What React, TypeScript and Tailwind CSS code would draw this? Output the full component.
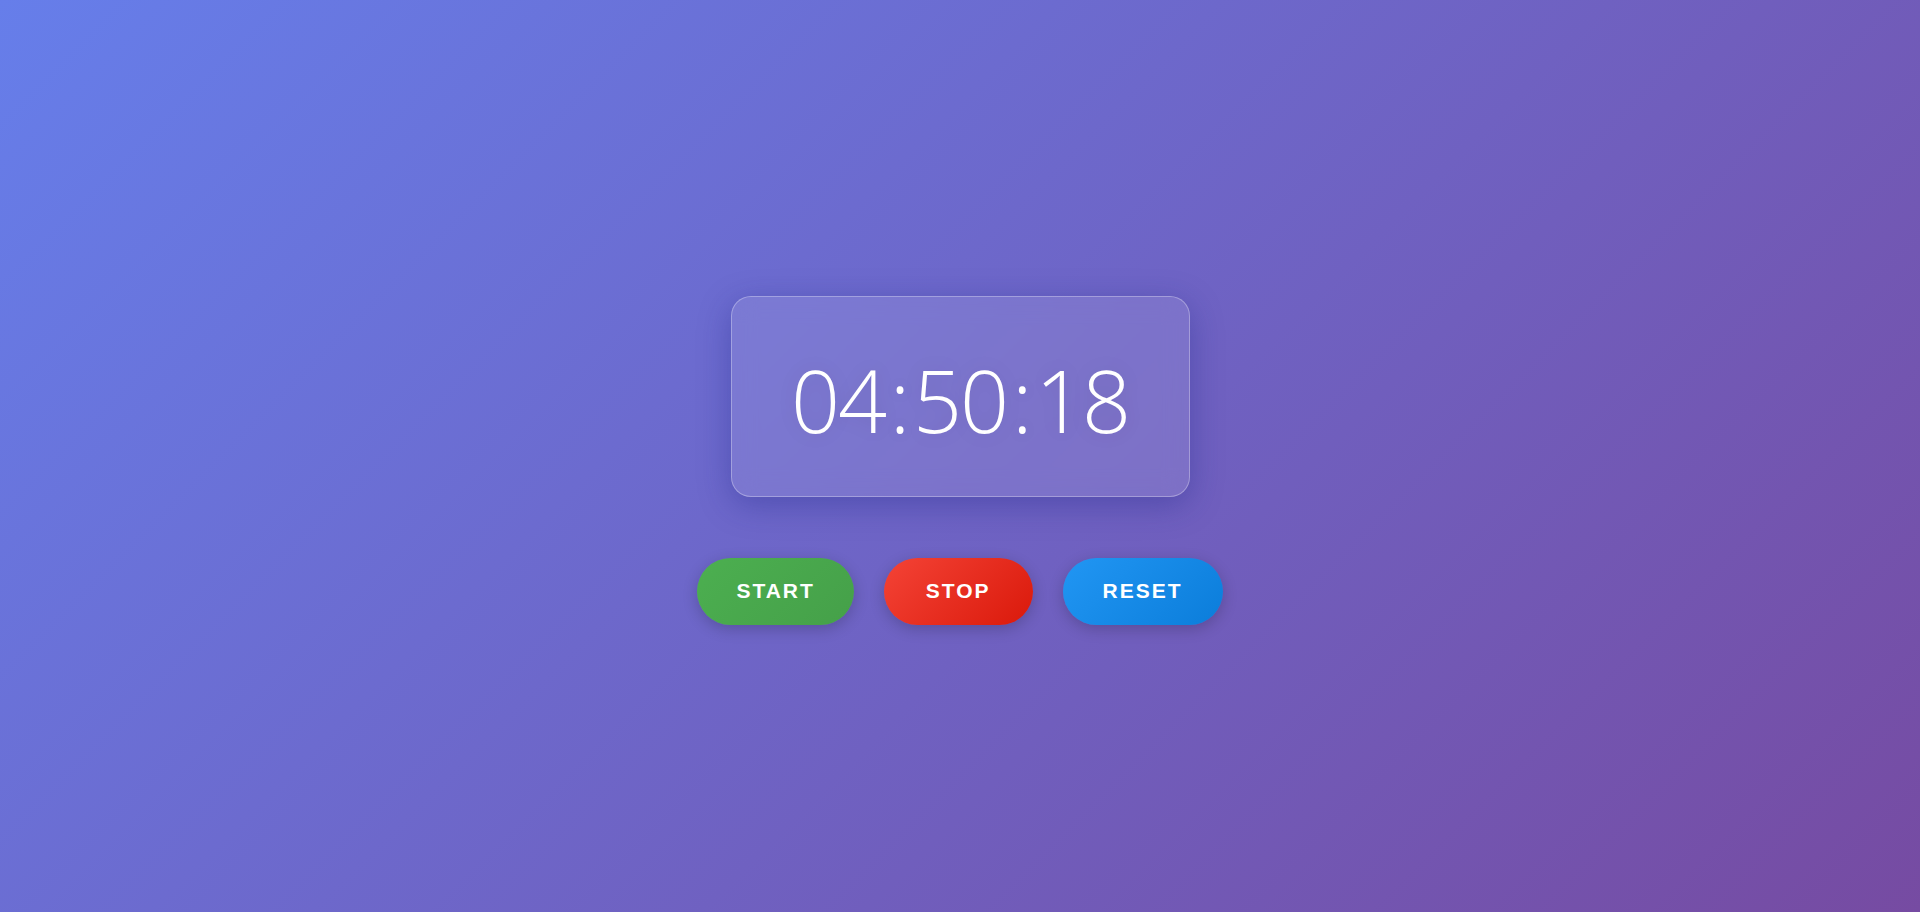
const buttons = [
  { label: "START", cls: "px-[39px] bg-[linear-gradient(135deg,#4caf50,#45a049)]" },
  { label: "STOP", cls: "px-[42px] bg-[linear-gradient(135deg,#f44336,#da190b)]" },
  { label: "RESET", cls: "px-[40px] bg-[linear-gradient(135deg,#2196f3,#0b7dda)]" },
];

export default function App() {
  const time = "04:50:18";
  return (
    <div className="min-h-screen w-full pt-[8px] flex flex-col items-center justify-center bg-[linear-gradient(135deg,#667eea_0%,#764ba2_100%)] font-['Open_Sans',sans-serif]">
      {/* clock card */}
      <div className="w-[459px] h-[201px] flex items-center justify-center rounded-[20px] border border-white/30 bg-white/10 backdrop-blur-md shadow-[0_8px_32px_0_rgba(31,38,135,0.37)]">
        <div className="pt-[8px] text-white text-[86px] font-light leading-none tracking-[-2.2px] [text-shadow:0_0_20px_rgba(0,0,0,0.1)]">
          {time.split("").map((c, i) =>
            c === ":" ? (
              <span key={i} className="px-[5px]">:</span>
            ) : (
              <span key={i}>{c}</span>
            )
          )}
        </div>
      </div>

      {/* controls */}
      <div className="mt-[61px] flex gap-[30px]">
        {buttons.map((b) => (
          <button
            key={b.label}
            className={`h-[67px] rounded-full text-white font-bold text-[21px] tracking-[2px] font-['Liberation_Sans',Arial,sans-serif] shadow-[0_4px_15px_rgba(0,0,0,0.2)] ${b.cls}`}
          >
            {b.label}
          </button>
        ))}
      </div>
    </div>
  );
}
